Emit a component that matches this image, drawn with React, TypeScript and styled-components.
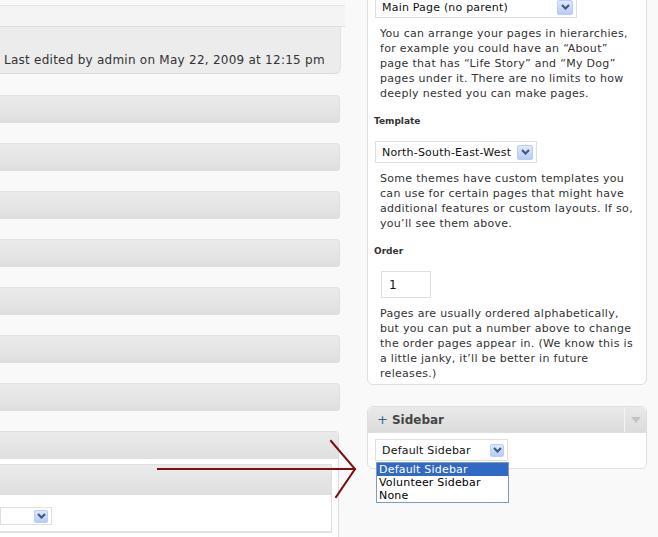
import React from 'react';
import styled, { createGlobalStyle } from 'styled-components';

const GlobalStyle = createGlobalStyle`
  html, body {
    margin: 0;
    padding: 0;
    background: #f9f9f9;
  }
  body {
    font-family: "DejaVu Sans", Verdana, sans-serif;
    color: #333;
  }
`;

const Page = styled.div`
  position: relative;
  display: flex;
  align-items: flex-start;
  width: 658px;
  height: 537px;
  overflow: hidden;
  background: #f9f9f9;
`;

const MainColumn = styled.div`
  width: 341px;
  flex-shrink: 0;
  display: flex;
  flex-direction: column;
`;

const EditorFoot = styled.div`
  margin-top: 5px;
  height: 20px;
  width: 345px;
  background: #f4f4f4;
  border-top: 1px solid #e6e6e6;
  border-bottom: 1px solid #dfdfdf;
`;

const StatusBox = styled.div`
  height: 47px;
  box-sizing: border-box;
  display: flex;
  align-items: flex-end;
  padding: 0 0 6px 4px;
  background: #ececec;
  border-right: 1px solid #e2e2e2;
  border-bottom: 1px solid #dcdcdc;
  border-bottom-right-radius: 6px;
  font-size: 12px;
  letter-spacing: 0.25px;
  color: #333;
`;

const BarList = styled.div`
  display: flex;
  flex-direction: column;
  gap: 20px;
  margin-top: 21px;
  width: 340px;
`;

const CollapsedBar = styled.div`
  height: 28px;
  box-sizing: border-box;
  border: 1px solid #dedede;
  border-left: none;
  border-top-color: #e2e2e2;
  border-radius: 0 4px 4px 0;
  background: linear-gradient(#ebebeb, #dfdfdf);
`;

const OpenBox = styled.div`
  width: 339px;
  box-sizing: border-box;
  border: 1px solid #dedede;
  border-left: none;
  border-radius: 0 4px 0 0;
  background: #fff;
  padding: 0 6px 20px 0;
`;

const OpenBoxHead = styled.div`
  height: 27px;
  margin-right: -6px;
  background: linear-gradient(#ebebeb, #dfdfdf);
`;

const InnerBox = styled.div`
  margin-top: 5px;
  border: 1px solid #dfdfdf;
  border-left: none;
  background: #fff;
`;

const InnerHead = styled.div`
  height: 30px;
  background: linear-gradient(#ebebeb, #dfdfdf);
`;

const InnerBody = styled.div`
  padding: 12px 0 6px 0;
  border-bottom: 1px solid #e4e4e4;
`;

const SideColumn = styled.div`
  width: 280px;
  margin-left: 26px;
  display: flex;
  flex-direction: column;
  gap: 21px;
`;

const Panel = styled.div<{ $openTop?: boolean }>`
  position: relative;
  box-sizing: border-box;
  background: #fff;
  border: 1px solid #dfdfdf;
  border-radius: ${({ $openTop }) => ($openTop ? '0 0 6px 6px' : '6px')};
  margin-top: ${({ $openTop }) => ($openTop ? '-10px' : '0')};
`;

const PanelBody = styled.div<{ $top?: number; $bottom?: number }>`
  padding: ${({ $top }) => $top ?? 5}px 0 ${({ $bottom }) => $bottom ?? 5}px 7px;
`;

const PanelHead = styled.div`
  display: flex;
  align-items: stretch;
  height: 25px;
  border-bottom: 1px solid #dfdfdf;
  border-radius: 6px 6px 0 0;
  background: linear-gradient(#e9e9e9, #dcdcdc);
`;

const PanelTitle = styled.h3`
  flex: 1;
  margin: 0;
  display: flex;
  align-items: center;
  gap: 4px;
  padding-left: 9px;
  font-size: 12px;
  font-weight: bold;
  color: #464646;
`;

const Plus = styled.span`
  font-weight: normal;
  font-size: 13px;
  color: #2e6b8a;
`;

const Handle = styled.div`
  width: 21px;
  border-left: 1px solid #f4f4f4;
  display: flex;
  align-items: center;
  justify-content: center;
`;

const HandleArrow = styled.span`
  width: 0;
  height: 0;
  border-left: 5px solid transparent;
  border-right: 5px solid transparent;
  border-top: 6px solid #c4c4c4;
`;

const SelectBox = styled.div<{ $width: number; $height?: number }>`
  position: relative;
  box-sizing: border-box;
  width: ${({ $width }) => $width}px;
  height: ${({ $height }) => $height ?? 22}px;
  display: flex;
  align-items: center;
  justify-content: space-between;
  padding: 0 3px 0 6px;
  background: #fff;
  border: 1px solid #dfdfdf;
  font-size: 11px;
  letter-spacing: 0.2px;
  color: #111;
  white-space: nowrap;
`;

const ComboButton = styled.span<{ $small?: boolean }>`
  box-sizing: border-box;
  width: ${({ $small }) => ($small ? 14 : 16)}px;
  height: ${({ $small }) => ($small ? 13 : 15)}px;
  display: flex;
  align-items: center;
  justify-content: center;
  border: 1px solid #b9cdf6;
  border-radius: 2px;
  background: linear-gradient(#dfe9fe, #b6cbf8);
`;

const Help = styled.p`
  margin: 8px 0 0 5px;
  font-size: 11px;
  line-height: 15px;
  letter-spacing: 0.3px;
  white-space: nowrap;
  color: #333;
`;

const FieldLabel = styled.h5`
  margin: 14px 0 14px -1px;
  font-size: 9px;
  line-height: 12px;
  font-weight: bold;
  color: #333;
`;

const OrderInput = styled.div`
  box-sizing: border-box;
  width: 50px;
  height: 27px;
  margin-left: 6px;
  display: flex;
  align-items: center;
  padding-left: 7px;
  border: 1px solid #dfdfdf;
  font-size: 12px;
  color: #111;
`;

const DropList = styled.ul`
  position: absolute;
  top: 22px;
  left: 0;
  width: 133px;
  box-sizing: border-box;
  margin: 0;
  padding: 0;
  list-style: none;
  background: #fff;
  border: 1px solid #7f9db9;
  z-index: 2;
`;

const DropItem = styled.li<{ $active?: boolean }>`
  height: 13px;
  line-height: 13px;
  padding-left: 2px;
  font-size: 11px;
  letter-spacing: 0.2px;
  color: ${({ $active }) => ($active ? '#fff' : '#000')};
  background: ${({ $active }) => ($active ? '#316ac5' : 'transparent')};
`;

const Annotation = styled.svg`
  position: absolute;
  left: 0;
  top: 0;
  pointer-events: none;
`;

const Chevron: React.FC = () => (
  <svg width="9" height="6" viewBox="0 0 9 6">
    <path d="M1 1 L4.5 4.5 L8 1" fill="none" stroke="#44587e" strokeWidth="2.2" />
  </svg>
);

const Combo: React.FC<{
  width: number;
  height?: number;
  small?: boolean;
  value?: string;
  children?: React.ReactNode;
}> = ({ width, height, small, value, children }) => (
  <SelectBox $width={width} $height={height}>
    <span>{value}</span>
    <ComboButton $small={small}>
      <Chevron />
    </ComboButton>
    {children}
  </SelectBox>
);

const HelpText: React.FC<{ lines: string[] }> = ({ lines }) => (
  <Help>
    {lines.map((line, i) => (
      <React.Fragment key={i}>
        {i > 0 && <br />}
        {line}
      </React.Fragment>
    ))}
  </Help>
);

const sidebarOptions = ['Default Sidebar', 'Volunteer Sidebar', 'None'];

export default function App() {
  return (
    <>
      <GlobalStyle />
      <Page>
        <MainColumn>
          <EditorFoot />
          <StatusBox>Last edited by admin on May 22, 2009 at 12:15 pm</StatusBox>
          <BarList>
            {Array.from({ length: 7 }).map((_, i) => (
              <CollapsedBar key={i} />
            ))}
            <OpenBox>
              <OpenBoxHead />
              <InnerBox>
                <InnerHead />
                <InnerBody>
                  <Combo width={52} height={18} small />
                </InnerBody>
              </InnerBox>
            </OpenBox>
          </BarList>
        </MainColumn>

        <SideColumn>
          <Panel $openTop>
            <PanelBody $top={5} $bottom={3}>
              <Combo width={202} value="Main Page (no parent)" />
              <HelpText
                lines={[
                  'You can arrange your pages in hierarchies,',
                  'for example you could have an “About”',
                  'page that has “Life Story” and “My Dog”',
                  'pages under it. There are no limits to how',
                  'deeply nested you can make pages.',
                ]}
              />
              <FieldLabel>Template</FieldLabel>
              <Combo width={162} value="North-South-East-West" />
              <HelpText
                lines={[
                  'Some themes have custom templates you',
                  'can use for certain pages that might have',
                  'additional features or custom layouts. If so,',
                  'you’ll see them above.',
                ]}
              />
              <FieldLabel>Order</FieldLabel>
              <OrderInput>1</OrderInput>
              <HelpText
                lines={[
                  'Pages are usually ordered alphabetically,',
                  'but you can put a number above to change',
                  'the order pages appear in. (We know this is',
                  'a little janky, it’ll be better in future',
                  'releases.)',
                ]}
              />
            </PanelBody>
          </Panel>

          <Panel>
            <PanelHead>
              <PanelTitle>
                <Plus>+</Plus>
                Sidebar
              </PanelTitle>
              <Handle>
                <HandleArrow />
              </Handle>
            </PanelHead>
            <PanelBody $top={6} $bottom={7}>
              <Combo width={133} value="Default Sidebar" small>
                <DropList>
                  {sidebarOptions.map((option, i) => (
                    <DropItem key={option} $active={i === 0}>
                      {option}
                    </DropItem>
                  ))}
                </DropList>
              </Combo>
            </PanelBody>
          </Panel>
        </SideColumn>

        <Annotation width="658" height="537" viewBox="0 0 658 537">
          <g stroke="#7a1010" strokeWidth="2" fill="none" strokeLinecap="square">
            <path d="M158 469 L355 469" />
            <path d="M331 441 L355 469 L336 497" />
          </g>
        </Annotation>
      </Page>
    </>
  );
}
